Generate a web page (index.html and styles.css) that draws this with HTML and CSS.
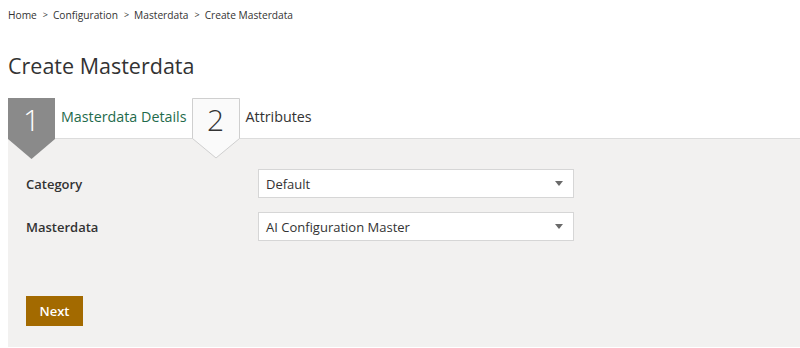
FILE: index.html
```html
<!DOCTYPE html>
<html>
<head>
<meta charset="utf-8">
<link rel="stylesheet" href="styles.css">
</head>
<body>
<div class="page">
  <nav class="crumbs">
    <span>Home</span><span class="sep">&gt;</span><span>Configuration</span><span class="sep">&gt;</span><span>Masterdata</span><span class="sep">&gt;</span><span>Create Masterdata</span>
  </nav>
  <h1 class="title">Create Masterdata</h1>
  <div class="steps">
    <div class="step step-active">
      <svg class="badge" width="47" height="61" viewBox="0 0 47 61"><polygon points="0,0 47,0 47,41 23.5,61 0,41" fill="#8a8a8a"/></svg>
      <span class="num">1</span>
    </div>
    <span class="step-label label-active">Masterdata Details</span>
    <div class="step">
      <svg class="badge" width="48" height="61" viewBox="0 0 48 61"><polygon points="0.5,0.5 47.5,0.5 47.5,40.5 24,60 0.5,40.5" fill="#fafafa" stroke="#cfcfcf" stroke-width="1"/></svg>
      <span class="num num-dark">2</span>
    </div>
    <span class="step-label">Attributes</span>
  </div>
  <section class="panel">
    <div class="row">
      <label class="lbl">Category</label>
      <div class="select"><span>Default</span><span class="arrow"></span></div>
    </div>
    <div class="row">
      <label class="lbl">Masterdata</label>
      <div class="select"><span>AI Configuration Master</span><span class="arrow"></span></div>
    </div>
    <button class="btn">Next</button>
  </section>
</div>
</body>
</html>
```
FILE: styles.css
```css
html, body { margin: 0; padding: 0; background: #fff; }
body { font-family: "Open Sans", "Noto Sans", sans-serif; color: #333; }
.page { padding-left: 8px; }
.crumbs { font-size: 10.2px; padding-top: 8px; height: 14px; line-height: 14px; color: #333; display: flex; }
.crumbs .sep { margin: 0 5px 0 6px; font-size: 9px; }
.title { font-size: 21.5px; font-weight: 400; margin: 29px 0 0 0; line-height: 30px; height: 30px; color: #333; }
.steps { display: flex; align-items: flex-start; height: 40px; margin-top: 17px; position: relative; z-index: 1; }
.step { position: relative; width: 47px; height: 61px; flex: none; }
.step + .step-label + .step { width: 48px; }
.badge { display: block; }
.num { position: absolute; left: 0; right: 0; top: 2px; text-align: center; font-size: 30px; font-weight: 300; line-height: 40px; color: #fff; }
.num-dark { color: #333; }
.step-label { font-size: 14.3px; line-height: 38px; height: 40px; margin: 0 5px 0 6px; color: #333; }
.label-active { color: #1f6b4c; }
.panel { background: #f2f1f0; border-top: 1px solid #dcdcdc; padding: 30px 0 21px 18px; }
.row { display: flex; align-items: center; margin-bottom: 14px; }
.lbl { width: 232px; font-size: 13px; font-weight: 600; color: #333; }
.select { width: 307px; height: 27px; background: #fff; border: 1px solid #d6d6d6; display: flex; align-items: center; justify-content: space-between; padding: 0 0 0 7px; box-sizing: content-box; font-size: 13px; color: #333; }
.arrow { width: 0; height: 0; border-left: 4px solid transparent; border-right: 4px solid transparent; border-top: 5px solid #6a6a6a; margin-right: 10px; }
.btn { margin-top: 55px; display: block; width: 57px; height: 30px; background: #a36a00; color: #fff; border: none; font-family: inherit; font-size: 13px; font-weight: 600; padding: 0; }
```
